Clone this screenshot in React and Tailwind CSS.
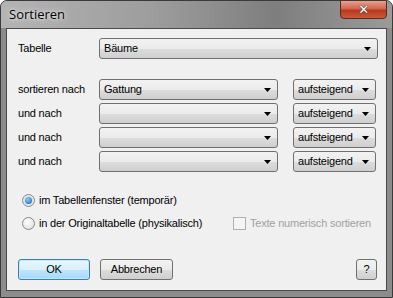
import React from 'react'

function Arrow() {
  return (
    <svg width="7" height="4" viewBox="0 0 7 4" className="shrink-0">
      <path d="M0 0h7L3.5 4z" fill="#000" />
    </svg>
  )
}

function Combo({ value, className }) {
  return (
    <div className={`h-[21px] shrink-0 flex items-center border border-[#707070] rounded-[3px] bg-[linear-gradient(#f2f2f2_0%,#ebebeb_50%,#dddddd_51%,#cfcfcf_100%)] pl-[4px] pr-[6px] ${className}`}>
      <span className="flex-1 truncate">{value}</span>
      <Arrow />
    </div>
  )
}

function Row({ label, value }) {
  return (
    <div className="flex items-center h-[21px] mt-[3px]">
      <span className="w-[81px] shrink-0">{label}</span>
      <Combo value={value} className="w-[179px]" />
      <Combo value="aufsteigend" className="w-[83px] ml-[15px]" />
    </div>
  )
}

export default function App() {
  return (
    <div className="w-[393px] h-[298px] flex flex-col bg-[#8c8c8c] border border-[#3a3a3a] rounded-t-[7px] overflow-hidden whitespace-nowrap text-[11px] tracking-[-0.2px] text-black font-['Liberation_Sans',Arial,sans-serif]">
      <div className="h-[27px] flex items-start shrink-0 bg-[linear-gradient(90deg,#b4b4b4_0%,#9c9c9c_40%,#7e7e7e_70%,#9a9a9a_100%)]">
        <span className="mt-[4px] ml-[7px] px-[1px] text-[13px] tracking-normal font-['Open_Sans',sans-serif] text-black [text-shadow:0_0_6px_#e8e8e8,0_0_3px_#e8e8e8]">Sortieren</span>
        <div className="ml-auto mr-[5px] w-[47px] h-[19px] -mt-[1px] rounded-b-[4px] border border-[#5a2a20] bg-[linear-gradient(#e8a090_0%,#d2664e_45%,#b8381e_55%,#c85a3c_100%)] flex items-center justify-center">
          <span className="text-white font-bold text-[13px] leading-none font-['DejaVu_Sans',sans-serif] [text-shadow:0_0_1px_#333,0_0_1px_#333]">✕</span>
        </div>
      </div>
      <div className="flex-1 mx-[5px] mb-[6px] border border-[#4a4a4a] bg-[#f0f0f0] pt-[9px] pl-[11px] pr-[8px] flex flex-col">
        <div className="flex items-center h-[21px]">
          <span className="w-[81px] shrink-0">Tabelle</span>
          <Combo value="Bäume" className="flex-1" />
        </div>
        <div className="h-[17px]" />
        <Row label="sortieren nach" value="Gattung" />
        <Row label="und nach" value="" />
        <Row label="und nach" value="" />
        <Row label="und nach" value="" />

        <div className="flex items-center h-[16px] mt-[20px] ml-[4px]">
          <span className="w-[13px] h-[13px] shrink-0 rounded-full border border-[#8a8a8a] bg-[#e4e4e4] flex items-center justify-center">
            <span className="w-[7px] h-[7px] rounded-full bg-[radial-gradient(circle_at_40%_35%,#7fd0ff,#1560b0)]" />
          </span>
          <span className="ml-[4px]">im Tabellenfenster (temporär)</span>
        </div>
        <div className="flex items-center h-[16px] mt-[7px] ml-[4px]">
          <span className="w-[13px] h-[13px] shrink-0 rounded-full border border-[#8a8a8a] bg-[radial-gradient(circle_at_40%_35%,#ffffff,#d8d8d8)]" />
          <span className="ml-[4px] w-[194px] shrink-0">in der Originaltabelle (physikalisch)</span>
          <span className="w-[13px] h-[13px] shrink-0 border border-[#b0b0b0] bg-[#f4f4f4]" />
          <span className="ml-[4px] text-[#a0a0a0]">Texte numerisch sortieren</span>
        </div>

        <div className="flex items-center mt-[28px]">
          <button className="w-[72px] h-[21px] rounded-[3px] border border-[#3c7fb1] bg-[linear-gradient(#eaf6fd_0%,#d9f0fc_50%,#bee6fd_51%,#a7d9f5_100%)] shadow-[inset_0_0_0_1px_#c0e8fa]">OK</button>
          <button className="ml-[10px] w-[73px] h-[21px] rounded-[3px] border border-[#707070] bg-[linear-gradient(#f2f2f2_0%,#ebebeb_50%,#dddddd_51%,#cfcfcf_100%)]">Abbrechen</button>
          <button className="ml-auto mr-[1px] w-[21px] h-[21px] rounded-[3px] border border-[#707070] bg-[linear-gradient(#f2f2f2_0%,#ebebeb_50%,#dddddd_51%,#cfcfcf_100%)]">?</button>
        </div>
      </div>
    </div>
  )
}
